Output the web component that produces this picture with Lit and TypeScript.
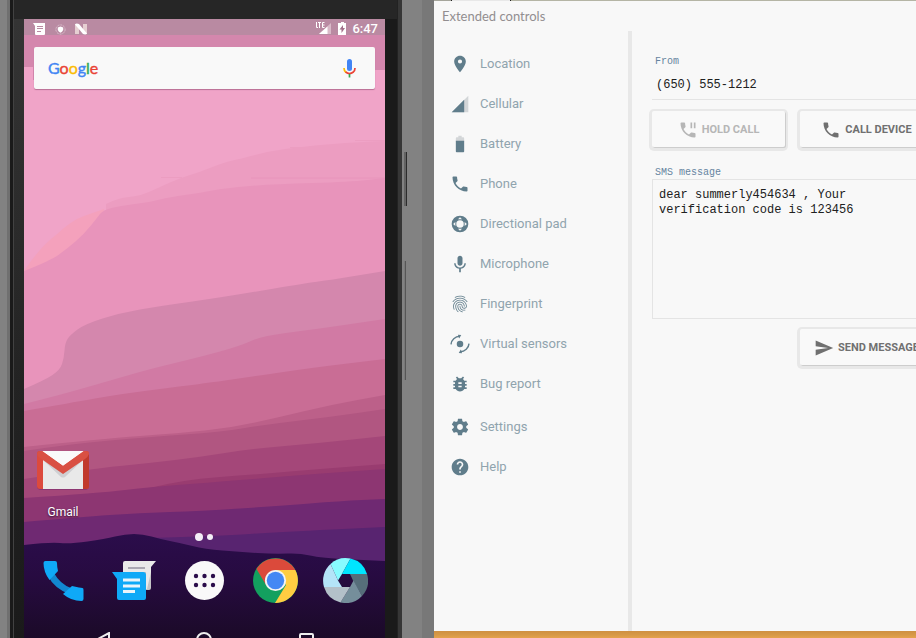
import { LitElement, html, css, svg } from "lit";
import { customElement } from "lit/decorators.js";

type Point = [number, number];

const SCREEN = { left: 24, top: 19, right: 385, bottom: 638 };

/** Wallpaper bands, back to front. Each contour is filled down to the bottom edge. */
const BANDS: { color: string; line: Point[] }[] = [
  { color: "#ec9dc1", line: [[106, 204], [118, 198], [140, 196], [160, 187], [180, 178], [200, 172], [225, 162], [240, 159], [270, 151], [300, 147], [330, 144], [360, 142], [385, 141]] },
  { color: "#e894bb", line: [[24, 271], [50, 261], [68, 248], [84, 234], [97, 218], [103, 210], [120, 206], [150, 202], [170, 197], [200, 193], [225, 188], [275, 184], [350, 182], [385, 178]] },
  { color: "#d487ad", line: [[24, 389], [45, 380], [60, 370], [64, 358], [65, 343], [70, 335], [85, 324], [120, 313], [160, 306], [225, 297], [300, 284], [330, 280], [385, 271]] },
  { color: "#d17aa4", line: [[24, 404], [60, 395], [112, 380], [150, 369], [200, 357], [240, 346], [262, 336], [310, 330], [385, 319]] },
  { color: "#c96d95", line: [[24, 411], [70, 403], [120, 394], [200, 384], [250, 377], [310, 368], [385, 359]] },
  { color: "#bc6089", line: [[24, 447], [100, 439], [180, 433], [230, 428], [280, 417], [330, 405], [385, 395]] },
  { color: "#b15681", line: [[24, 451], [70, 444], [150, 437], [220, 432], [270, 424], [330, 417], [385, 409]] },
  { color: "#a44779", line: [[24, 479], [90, 469], [150, 463], [200, 457], [250, 449], [320, 443], [385, 436]] },
  { color: "#993c70", line: [[150, 488], [180, 480], [260, 474], [320, 469], [385, 464]] },
  { color: "#8d3672", line: [[24, 498], [100, 493], [150, 487], [230, 481], [300, 475], [385, 469]] },
  { color: "#6f2972", line: [[24, 522], [80, 517], [140, 513], [200, 511], [280, 506], [340, 501], [385, 499]] },
  { color: "#582470", line: [[150, 538], [220, 536], [280, 532], [385, 527]] },
  { color: "url(#hill)", line: [[24, 545], [50, 542], [70, 544], [105, 539], [125, 534], [143, 534], [160, 539], [180, 543], [205, 549], [240, 552], [275, 554], [300, 553], [320, 558], [385, 561]] },
];

function contour(line: Point[]): string {
  const [first, ...rest] = line;
  let d = `M${first[0]} ${SCREEN.bottom}V${first[1]}`;
  rest.forEach(([x, y], i) => {
    const next = rest[i + 1];
    d += next ? `Q${x} ${y} ${(x + next[0]) / 2} ${(y + next[1]) / 2}` : `L${x} ${y}`;
  });
  return `${d}V${SCREEN.bottom}Z`;
}

const PHONE = "M6.62 10.79c1.44 2.83 3.76 5.14 6.59 6.59l2.2-2.2c.27-.27.67-.36 1.02-.24 1.12.37 2.33.57 3.57.57.55 0 1 .45 1 1V20c0 .55-.45 1-1 1-9.39 0-17-7.61-17-17 0-.55.45-1 1-1h3.5c.55 0 1 .45 1 1 0 1.25.2 2.45.57 3.57.11.35.03.74-.25 1.02l-2.2 2.2z";

const ICONS = {
  location: svg`<path d="M12 2C8.13 2 5 5.13 5 9c0 5.25 7 13 7 13s7-7.75 7-13c0-3.87-3.13-7-7-7zm0 9.500a2.500 2.500 0 1 1 0-5 2.500 2.500 0 0 1 0 5z"/>`,
  cellular: svg`<path fill="#d3d6d8" d="M2 22h20V2z"/><path d="M17 7L2 22h15z"/>`,
  battery: svg`<path fill="#d3d6d8" d="M17 5.330C17 4.600 16.400 4 15.670 4H14V2h-4v2H8.330C7.600 4 7 4.600 7 5.330V9h10z"/><path d="M7 8v12.670C7 21.400 7.600 22 8.330 22h7.330c.74 0 1.340-.6 1.340-1.330V8z"/>`,
  phone: svg`<path d=${PHONE}/>`,
  dpad: svg`<path fill-rule="evenodd" d="M12 2a10 10 0 1 0 0 20 10 10 0 0 0 0-20zM12 7.500a4.500 4.500 0 1 1 0 9 4.500 4.500 0 0 1 0-9zM12 3.800l2.400 2.600H9.600zM12 20.200l-2.400-2.600h4.800zM3.800 12l2.600-2.400v4.800zM20.200 12l-2.600 2.400V9.600z"/>`,
  mic: svg`<path d="M12 14c1.660 0 3-1.340 3-3V5c0-1.660-1.340-3-3-3S9 3.340 9 5v6c0 1.660 1.340 3 3 3zm5.300-3c0 3-2.540 5.100-5.300 5.100S6.700 14 6.700 11H5c0 3.410 2.720 6.230 6 6.720V22h2v-4.280c3.280-.48 6-3.300 6-6.720h-1.700z"/>`,
  fingerprint: svg`<path d="M17.81 4.47c-.08 0-.16-.02-.23-.06C15.66 3.42 14 3 12.01 3c-1.98 0-3.86.47-5.57 1.41-.24.13-.54.04-.68-.2-.13-.24-.04-.55.2-.68C7.82 2.52 9.86 2 12.01 2c2.13 0 3.99.47 6.03 1.52.25.13.34.43.21.67-.09.18-.26.28-.44.28zM3.5 9.72c-.1 0-.2-.03-.29-.09-.23-.16-.28-.47-.12-.7.99-1.4 2.25-2.5 3.75-3.27C9.98 4.04 14 4.03 17.15 5.65c1.5.77 2.76 1.86 3.75 3.25.16.22.11.54-.12.7-.23.16-.54.11-.7-.12-.9-1.26-2.04-2.25-3.39-2.94-2.87-1.47-6.54-1.47-9.4.01-1.36.7-2.5 1.7-3.4 2.96-.08.14-.23.21-.39.21zm6.25 12.07c-.13 0-.26-.05-.35-.15-.87-.87-1.34-1.43-2.01-2.64-.69-1.23-1.05-2.73-1.05-4.34 0-2.97 2.54-5.39 5.66-5.39s5.66 2.42 5.66 5.39c0 .28-.22.5-.5.5s-.5-.22-.5-.5c0-2.42-2.09-4.39-4.66-4.39-2.57 0-4.66 1.97-4.66 4.39 0 1.44.32 2.77.93 3.85.64 1.15 1.08 1.64 1.85 2.42.19.2.19.51 0 .71-.11.1-.24.15-.37.15zm7.17-1.85c-1.19 0-2.24-.3-3.1-.89-1.49-1.01-2.38-2.65-2.38-4.39 0-.28.22-.5.5-.5s.5.22.5.5c0 1.41.72 2.74 1.94 3.56.71.48 1.54.71 2.54.71.24 0 .64-.03 1.04-.1.27-.05.53.13.58.41.05.27-.13.53-.41.58-.57.11-1.07.12-1.21.12zM14.91 22c-.04 0-.09-.01-.13-.02-1.59-.44-2.63-1.03-3.72-2.1-1.4-1.39-2.17-3.24-2.17-5.22 0-1.62 1.38-2.94 3.08-2.94 1.7 0 3.08 1.32 3.08 2.94 0 1.07.93 1.94 2.08 1.94s2.08-.87 2.08-1.94c0-3.77-3.25-6.83-7.25-6.83-2.84 0-5.44 1.58-6.61 4.03-.39.81-.59 1.76-.59 2.8 0 .78.07 2.01.67 3.61.1.26-.03.55-.29.64-.26.1-.55-.04-.64-.29-.49-1.31-.73-2.61-.73-3.96 0-1.2.23-2.29.68-3.24 1.33-2.79 4.28-4.6 7.51-4.6 4.55 0 8.25 3.51 8.25 7.83 0 1.62-1.38 2.94-3.08 2.94s-3.08-1.32-3.08-2.94c0-1.07-.93-1.94-2.08-1.94s-2.08.87-2.08 1.94c0 1.71.66 3.31 1.87 4.51.95.94 1.86 1.46 3.27 1.85.27.07.42.35.35.61-.05.23-.26.38-.47.38z"/>`,
  sensors: svg`<circle cx="12" cy="12" r="3.900"/><g fill="none" stroke="currentColor" stroke-width="1.700"><path d="M1.200 12.500C1.600 7 6 2.900 12 2.700"/><path d="M22.800 11.500C22.400 17 18 21.100 12 21.300"/></g><path d="M9.500 1l4 .2-2.500 4.300zM14.500 23l-4-.2 2.500-4.300z"/>`,
  bug: svg`<path d="M20 8h-2.810c-.45-.78-1.070-1.450-1.820-1.960L17 4.410 15.590 3l-2.170 2.170C12.960 5.060 12.490 5 12 5c-.49 0-.96.060-1.410.170L8.410 3 7 4.410l1.620 1.630C7.880 6.550 7.260 7.220 6.810 8H4v2h2.090c-.05.33-.09.66-.09 1v1H4v2h2v1c0 .34.040.67.090 1H4v2h2.810c1.040 1.790 2.970 3 5.190 3s4.150-1.210 5.190-3H20v-2h-2.090c.05-.33.090-.66.090-1v-1h2v-2h-2v-1c0-.34-.04-.67-.09-1H20V8zm-6 8h-4v-2h4v2zm0-4h-4v-2h4v2z"/>`,
  settings: svg`<path d="M19.430 12.980c.04-.32.070-.64.070-.98s-.03-.66-.07-.98l2.110-1.650c.19-.15.240-.42.120-.64l-2-3.460c-.12-.22-.39-.3-.61-.22l-2.490 1c-.52-.4-1.080-.73-1.690-.98l-.38-2.650C14.460 2.180 14.250 2 14 2h-4c-.25 0-.46.180-.49.420l-.38 2.650c-.61.250-1.170.59-1.690.98l-2.490-1c-.23-.09-.49 0-.61.220l-2 3.460c-.13.220-.07.490.120.640l2.110 1.650c-.04.320-.07.650-.07.980s.03.660.070.980l-2.110 1.650c-.19.150-.24.420-.12.640l2 3.460c.12.220.390.3.610.220l2.490-1c.52.4 1.080.730 1.690.980l.38 2.650c.03.240.240.420.490.420h4c.25 0 .46-.18.490-.42l.38-2.650c.61-.25 1.170-.59 1.690-.98l2.490 1c.23.090.490 0 .61-.22l2-3.460c.12-.22.070-.49-.12-.64l-2.110-1.650zM12 15.500c-1.930 0-3.500-1.570-3.500-3.500s1.570-3.500 3.500-3.500 3.500 1.570 3.500 3.500-1.570 3.500-3.500 3.500z"/>`,
  help: svg`<path d="M12 2C6.480 2 2 6.480 2 12s4.480 10 10 10 10-4.480 10-10S17.520 2 12 2zm1 17h-2v-2h2v2zm2.070-7.750l-.9.920C13.450 12.900 13 13.500 13 15h-2v-.5c0-1.100.45-2.100 1.170-2.830l1.240-1.260c.37-.36.590-.86.590-1.410 0-1.100-.9-2-2-2s-2 .9-2 2H8c0-2.210 1.790-4 4-4s4 1.790 4 4c0 .88-.36 1.680-.93 2.250z"/>`,
  hold: svg`<path d="M20 15.500c-1.250 0-2.450-.2-3.570-.57-.35-.11-.74-.03-1.020.24l-2.200 2.200c-2.830-1.440-5.150-3.750-6.590-6.580l2.200-2.210c.28-.27.360-.66.250-1.010C8.700 6.450 8.500 5.250 8.500 4c0-.55-.45-1-1-1H4c-.55 0-1 .45-1 1 0 9.390 7.610 17 17 17 .55 0 1-.45 1-1v-3.500c0-.55-.45-1-1-1zM19 3v7h2V3h-2zm-2 0h-2v7h2V3z"/>`,
  send: svg`<path d="M2 21l21-9L2 3v7l15 2-15 2z"/>`,
};

type IconName = keyof typeof ICONS;

const icon = (name: IconName) =>
  html`<svg class="icon" viewBox="0 0 24 24" aria-hidden="true">${ICONS[name]}</svg>`;

const MENU: { label: string; icon: IconName }[] = [
  { label: "Location", icon: "location" },
  { label: "Cellular", icon: "cellular" },
  { label: "Battery", icon: "battery" },
  { label: "Phone", icon: "phone" },
  { label: "Directional pad", icon: "dpad" },
  { label: "Microphone", icon: "mic" },
  { label: "Fingerprint", icon: "fingerprint" },
  { label: "Virtual sensors", icon: "sensors" },
  { label: "Bug report", icon: "bug" },
];

const FOOT_MENU: { label: string; icon: IconName }[] = [
  { label: "Settings", icon: "settings" },
  { label: "Help", icon: "help" },
];

@customElement("phone-device")
export class PhoneDevice extends LitElement {
  static styles = css`
    :host {
      display: flex;
      position: relative;
      box-sizing: border-box;
      padding: 19px 37px 0 0;
      background: linear-gradient(to right, #787878, #787878) right / 12px 100% no-repeat, #828282;
      font-family: Roboto, "Liberation Sans", sans-serif;
    }
    .shell {
      flex: 1;
      display: flex;
      margin: -19px -5px 0 7px;
      padding: 19px 17px 0;
      background:
        linear-gradient(#707070, #707070) left / 3px 100% no-repeat,
        linear-gradient(to right, #1a1a1a 3px, #424242 3px, #424242 4px, transparent 4px) 3px 0 / 4px 100% no-repeat,
        linear-gradient(to right, #222 1px, #363636 1px) right / 5px 100% no-repeat,
        linear-gradient(#262626, #262626) top / 100% 19px no-repeat,
        linear-gradient(#1a1a1a, #1a1a1a) right / 17px 100% no-repeat,
        linear-gradient(#353535, #2b2b2b 35%, #232323 60%, #1a1a1a);
    }
    .key {
      position: absolute;
      right: 27px;
      top: 152px;
      width: 2px;
      height: 54px;
      border-right: 1px solid #2c2c2c;
      background: #636363;
    }
    .key.volume {
      right: 28px;
      top: 261px;
      width: 1px;
      height: 119px;
      border-color: #565656;
      background: #787878;
    }
    .screen {
      flex: 1;
      display: flex;
      flex-direction: column;
      position: relative;
      overflow: hidden;
      color: #fff;
    }
    .wallpaper {
      position: absolute;
      inset: 0;
      width: 100%;
      height: 100%;
    }
    .content {
      flex: 1;
      display: flex;
      flex-direction: column;
      position: relative;
    }
    .status {
      display: flex;
      align-items: center;
      justify-content: space-between;
      height: 16px;
      padding: 4px 7px 0 9px;
      box-sizing: border-box;
      background: #b98aa2;
    }
    .status svg { display: block; }
    .right {
      display: flex;
      align-items: center;
      gap: 5px;
      font-size: 13px;
      line-height: 16px;
      font-weight: 500;
    }
    .search {
      display: flex;
      align-items: center;
      justify-content: space-between;
      height: 42px;
      margin: 12px 10px 0;
      padding: 0 19px 0 14px;
      border-radius: 2px;
      background: #f9f9f9;
      box-shadow: 0 1px 1px #b86f94;
    }
    .logo {
      font: 16px/20px Lato, "Open Sans", sans-serif;
      -webkit-text-stroke: 0.4px currentColor;
    }
    .b { color: #4285f4; }
    .r { color: #e94335; }
    .y { color: #fbbc05; }
    .g { color: #34a853; }
    .mic {
      padding: 0;
      border: 0;
      background: none;
      line-height: 0;
    }
    .space { flex: 1; }
    .app {
      display: flex;
      flex-direction: column;
      align-items: center;
      align-self: flex-start;
      gap: 14px;
      margin-left: 12px;
      color: #fff;
      text-decoration: none;
      font-size: 12px;
      line-height: 16px;
      text-shadow: 0 1px 2px #301030;
    }
    .dots {
      display: flex;
      align-items: center;
      justify-content: center;
      gap: 4px;
      height: 8px;
      margin: 13px 2px 17px 0;
    }
    .dot {
      width: 6px;
      height: 6px;
      border-radius: 50%;
      background: #f4eef6;
    }
    .dot.current {
      width: 8px;
      height: 8px;
    }
    .dock {
      display: grid;
      grid-template-columns: repeat(5, 1fr);
      justify-items: center;
      padding: 0 4px;
    }
    .dock a, .dock svg { display: block; }
    .keys {
      display: flex;
      justify-content: space-between;
      height: 6px;
      margin: 29px 70px 0 73px;
      overflow: hidden;
    }
  `;

  render() {
    return html`
      <div class="shell">
        <div class="screen">
          <svg class="wallpaper" viewBox="24 19 361 619" preserveAspectRatio="none" aria-hidden="true">
            <defs>
              <linearGradient id="hill" x1="0" y1="0" x2="0" y2="1">
                <stop offset="0" stop-color="#2b0d4b" />
                <stop offset="0.4" stop-color="#270b41" />
                <stop offset="1" stop-color="#1b0a28" />
              </linearGradient>
            </defs>
            <rect x="24" y="19" width="361" height="619" fill="#f0a4c8" />
            <path fill="#d487ad" d="M24 19H385V70H374V80H33V67H24Z" />
            <path fill="#f4a1bc" d="M24 271Q40 247 56 235Q72 220 84 216L104 209V240L24 285Z" />
            ${BANDS.map((band) => svg`<path fill=${band.color} d=${contour(band.line)} />`)}
            <path stroke="#ec9dc1" d="M161 177.500H182M235 160.500H257M290 147.500H330M355 140.500H385" />
            <path stroke="#e894bb" d="M251 178H385" />
          </svg>
          <div class="content">
            <div class="status">
              <svg width="58" height="12" viewBox="0 0 58 12" aria-hidden="true">
                <path fill="#fff" d="M0 0h12v11q0 1-1 1H3q-1 0-1-1V3z" />
                <path stroke="#b98aa2" d="M4 3.500h6M4 5.500h6M4 8.500h4" />
                <circle cx="27.500" cy="6.500" r="4.600" fill="none" stroke="#dcc0cd" stroke-dasharray="2 1" />
                <path fill="#fff" d="M24.800 4.500l2.700-1 2.700 1v2.500q-1 2.300-2.700 2.800-1.700-.5-2.700-2.800z" />
                <path fill="#e6cfd2" d="M42 1h4v10h-4zM50 1h4v10h-4z" />
                <path fill="#fff" d="M42 1.500Q43 0 46 1L54 10.500Q53 12 50 11z" />
              </svg>
              <div class="right">
                <svg width="33" height="14" viewBox="0 0 33 14" aria-hidden="true">
                  <path fill="none" stroke="#fff" d="M2.500 0v5.500H4M4 .5h3M5.500.5V6M10.500.5H8.500v5H10.500M8.500 3h2" />
                  <path fill="#d9b9c8" d="M17 1v11H5z" />
                  <path fill="#fff" d="M13.500 4.500V12H5z" />
                  <path fill="#fff" d="M27 0h3v1h2v12h-8V1h3z" />
                  <path fill="#a2708a" d="M29 3v3h2l-3.500 5V7.500h-2z" />
                </svg>
                <span>6:47</span>
              </div>
            </div>
            <div class="search">
              <span class="logo"><span class="b">G</span><span class="r">o</span><span class="y">o</span><span class="b">g</span><span class="g">l</span><span class="r">e</span></span>
              <button class="mic" aria-label="Voice search">
                <svg width="13" height="19" viewBox="0 0 13 19" aria-hidden="true">
                  <rect x="4" y="0" width="5" height="12" rx="2.500" fill="#4285f4" />
                  <g fill="none" stroke-width="1.700">
                    <path stroke="#fbbc05" d="M1 9q0 3 2 4.500" />
                    <path stroke="#ea4335" d="M2.600 13q3.900 3.200 7.800 0Q12 11.500 12 9" />
                    <path stroke="#34a853" d="M6.500 15v3.500" />
                  </g>
                </svg>
              </button>
            </div>
            <div class="space"></div>
            <a class="app" href="#gmail">
              <svg width="54" height="40" viewBox="0 0 54 40" aria-hidden="true">
                <rect x="1" y="1" width="52" height="39" rx="4" fill="#8d3672" />
                <rect x="1" y="1" width="52" height="38" rx="3" fill="#dc4a3d" />
                <path fill="#c1392c" d="M47 8l6-4v32q0 3-3 3h-3z" />
                <path fill="#e9e9e9" d="M7 9l20 14L47 9v30H7z" />
                <path fill="#cfcfd2" d="M7 10l18 17q2 1 4 0l18-17v-1L27 22 7 9z" />
                <path fill="#fafafa" d="M6 1h42L27 16z" />
                <path fill="#d95043" d="M1 4q0-3 3-3h2l21 15L48 1h2q3 0 3 3-1 3-4 5L27 24 4 8Q1 6 1 4z" />
              </svg>
              <span>Gmail</span>
            </a>
            <div class="dots"><span class="dot current"></span><span class="dot"></span></div>
            <div class="dock">
              <a href="#dialer" aria-label="Phone">
                <svg width="45" height="45" viewBox="0 0 45 45">
                  <path fill="#1288d0" d="M7 18l6-3q6 11 17 15l-2 6Q13 30 7 18z" />
                  <path fill="#0fa9f7" d="M2.500 5q0-2 2-2H14q2 0 2 2 0 4 1 8L8.500 22Q2.500 14 2.500 5zM22 36l9-8 7 1.500 3.500.5q1 0 1 2v9q0 2-2 2Q30 43 22 36z" />
                </svg>
              </a>
              <a href="#messages" aria-label="Messages">
                <svg width="45" height="45" viewBox="0 0 45 45">
                  <path fill="#c4c4c6" d="M30 14h10v16q0 2-2 2h-8z" />
                  <path fill="#e9e9e9" d="M12 5q0-2 2-2h31l-5 6v5l-4 17h-1V14H12z" />
                  <path stroke="#aaa8b2" stroke-width="2" d="M17 10h17" />
                  <path fill="#0fa9f7" d="M1 14h31q3 0 3 3v23q0 2-2 2H8q-2 0-2-2V21z" />
                  <path stroke="#eaf4fa" stroke-width="3" d="M12 22h17M12 28h17M12 33.500h12" />
                </svg>
              </a>
              <a href="#apps" aria-label="All apps">
                <svg width="45" height="45" viewBox="0 0 45 45">
                  <circle cx="22.500" cy="22.500" r="19.500" fill="#f9f9f9" />
                  <g fill="#2b0d4b">
                    ${[18, 27].map((y) => [14, 22.5, 31].map((x) => svg`<circle cx=${x} cy=${y} r="2.200" />`))}
                  </g>
                </svg>
              </a>
              <a href="#chrome" aria-label="Browser">
                <svg width="45" height="45" viewBox="0 0 45 45">
                  <circle cx="22.500" cy="22.500" r="22.500" fill="#13a05f" />
                  <path fill="#ffcd42" d="M22.500 12H42.300A22.500 22.500 0 0 1 22 45L33 27z" />
                  <path fill="#db4a3b" d="M3.500 11A22.500 22.500 0 0 1 42.300 12H22.500L13 27z" />
                  <circle cx="22.500" cy="22.500" r="10.600" fill="#f4f4f4" />
                  <circle cx="22.500" cy="22.500" r="8.700" fill="#4488f4" />
                </svg>
              </a>
              <a href="#camera" aria-label="Camera">
                <svg width="45" height="45" viewBox="0 0 45 45">
                  <path fill="#88fbff" d="M7.500 6A22.500 22.500 0 0 1 27.500 .600L19 16l-4 6.500z" />
                  <path fill="#00e5ff" d="M27.500 .600A22.500 22.500 0 0 1 44 16H19z" />
                  <path fill="#566e7a" d="M44 16A22.500 22.500 0 0 1 39 38L30 22.500 27 16z" />
                  <path fill="#758e9b" d="M39 38A22.500 22.500 0 0 1 17.500 44.400L27 29l3.500-6.500z" />
                  <path fill="#b3c0c9" d="M17.500 44.400A22.500 22.500 0 0 1 1 29H27z" />
                  <path fill="#b4e4f8" d="M1 29A22.500 22.500 0 0 1 7.500 6L15 22.500 19 29z" />
                </svg>
              </a>
            </div>
            <svg class="keys" width="218" height="16" viewBox="0 0 218 16" preserveAspectRatio="xMinYMin slice" aria-hidden="true">
              <g fill="none" stroke="#eee" stroke-width="2">
                <path d="M12 1v14L0 7.500z" />
                <circle cx="107" cy="8" r="7" />
                <rect x="203" y="2" width="13" height="13" rx="1" />
              </g>
            </svg>
          </div>
        </div>
      </div>
      <span class="key"></span><span class="key volume"></span>
    `;
  }
}

@customElement("extended-controls")
export class ExtendedControls extends LitElement {
  static styles = css`
    :host {
      display: flex;
      flex-direction: column;
      min-width: 0;
      overflow: hidden;
      box-sizing: border-box;
      padding-top: 1px;
      background:
        linear-gradient(to right, #a5a59b 17px, #222 17px, #222 18px, #e8e8e8 18px, #e8e8e8 76px, #222 76px, #222 77px, #b5b5a5 77px) top / 100% 1px no-repeat,
        #f8f8f8;
      font-family: Roboto, "Liberation Sans", sans-serif;
    }
    .title {
      margin: 0;
      padding: 5px 8px;
      font: 13px/20px Lato, "Open Sans", sans-serif;
      color: #928e90;
    }
    .body {
      flex: 1;
      display: flex;
    }
    .menu {
      flex: 0 0 194px;
      padding-top: 13px;
      border-right: 4px solid #e8e8e8;
    }
    .list {
      margin: 0 0 3px;
      padding: 0;
      list-style: none;
    }
    .item {
      display: flex;
      align-items: center;
      gap: 10px;
      height: 40px;
      padding-left: 16px;
      color: #607d8b;
      text-decoration: none;
    }
    .item span {
      font-size: 13px;
      line-height: 16px;
      color: #90a4ae;
    }
    .icon {
      flex: none;
      width: 20px;
      height: 20px;
      fill: currentColor;
    }
    .form {
      flex: 1;
      display: grid;
      grid-template-columns: repeat(2, minmax(133px, 160px));
      align-content: start;
      column-gap: 15px;
      min-width: 281px;
      padding: 25px 20px 0;
    }
    .label {
      grid-column: 1 / -1;
      padding-left: 3px;
      font: 10px/12px "Liberation Mono", monospace;
      color: #6684a0;
    }
    .field {
      grid-column: 1 / -1;
      box-sizing: border-box;
      width: 100%;
      margin: 0;
      border: 0 solid #e4e4e4;
      border-radius: 0;
      outline: 0;
      background: transparent;
      color: #202020;
      font: 12px/15px "Liberation Mono", monospace;
    }
    .number {
      height: 32px;
      padding: 3px 4px 0;
      border-bottom-width: 1px;
    }
    .message {
      height: 140px;
      padding: 8px 6px;
      border-width: 1px;
      resize: none;
      overflow: hidden;
    }
    .button {
      display: flex;
      align-items: center;
      justify-content: center;
      gap: 4px;
      height: 36px;
      margin: 11px 0 20px;
      padding: 1px 0 0;
      border: 0;
      border-radius: 2px;
      background: #f9f9f9;
      box-shadow: 1px 1px 0 #cdcdcd, 0 1px 0 3px #e8e8e8;
      font: 700 11px/16px Roboto, "Liberation Sans", sans-serif;
      color: #707070;
      white-space: nowrap;
    }
    .button:disabled { color: #b6b6b6; }
    .send {
      grid-column: 2;
      margin: 10px 0 0;
    }
  `;

  private item(entry: { label: string; icon: IconName }) {
    return html`<li><a class="item" href="#${entry.icon}">${icon(entry.icon)}<span>${entry.label}</span></a></li>`;
  }

  render() {
    return html`
      <h1 class="title">Extended controls</h1>
      <div class="body">
        <nav class="menu">
          <ul class="list">${MENU.map((entry) => this.item(entry))}</ul>
          <ul class="list">${FOOT_MENU.map((entry) => this.item(entry))}</ul>
        </nav>
        <form class="form">
          <label class="label" for="from">From</label>
          <input class="field number" id="from" type="tel" value="(650) 555-1212" />
          <button class="button" type="button" disabled>${icon("hold")}HOLD CALL</button>
          <button class="button" type="button">${icon("phone")}CALL DEVICE</button>
          <label class="label" for="sms">SMS message</label>
          <textarea class="field message" id="sms" spellcheck="false" .value=${"dear summerly454634 , Your\nverification code is 123456"}></textarea>
          <button class="button send" type="button">${icon("send")}SEND MESSAGE</button>
        </form>
      </div>
    `;
  }
}

@customElement("app-root")
export class AppRoot extends LitElement {
  static styles = css`
    :host {
      display: grid;
      grid-template-columns: minmax(434px, 47%) 1fr;
      height: 100vh;
      min-height: 560px;
      overflow: hidden;
    }
    .side {
      display: flex;
      flex-direction: column;
      min-width: 0;
    }
    .panel { flex: 1; }
    .desk {
      height: 7px;
      background: linear-gradient(#cf9042, #d69846 50%, #e5a24c);
    }
  `;

  render() {
    return html`
      <phone-device></phone-device>
      <div class="side">
        <extended-controls class="panel"></extended-controls>
        <div class="desk"></div>
      </div>
    `;
  }
}
